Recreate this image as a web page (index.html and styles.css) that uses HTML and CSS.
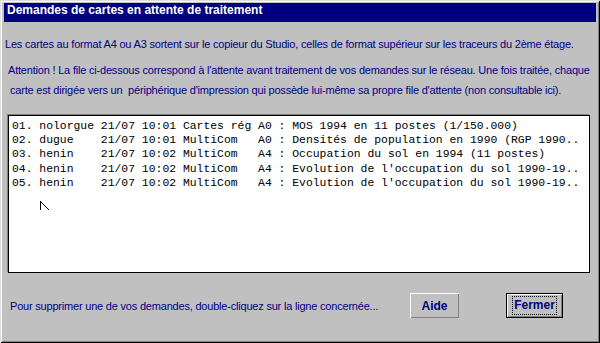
FILE: index.html
```html
<!DOCTYPE html>
<html lang="fr">
<head>
<meta charset="utf-8">
<title>Demandes de cartes en attente de traitement</title>
<link rel="stylesheet" href="styles.css">
</head>
<body>
<div class="window">
  <div class="titlebar">Demandes de cartes en attente de traitement</div>
  <div class="content">
    <p class="line line1">Les cartes au format A4 ou A3 sortent sur le copieur du Studio, celles de format supérieur sur les traceurs du 2ème étage.</p>
    <p class="line line2">Attention ! La file ci-dessous correspond à l'attente avant traitement de vos demandes sur le réseau. Une fois traitée, chaque</p>
    <p class="line line3">carte est dirigée vers un&nbsp; périphérique d'impression qui possède lui-même sa propre file d'attente (non consultable ici).</p>
    <div class="listbox">
      <div class="row">01. nolorgue 21/07 10:01 Cartes rég A0 : MOS 1994 en 11 postes (1/150.000)</div>
      <div class="row">02. dugue    21/07 10:01 MultiCom   A0 : Densités de population en 1990 (RGP 1990..</div>
      <div class="row">03. henin    21/07 10:02 MultiCom   A4 : Occupation du sol en 1994 (11 postes)</div>
      <div class="row">04. henin    21/07 10:02 MultiCom   A4 : Evolution de l'occupation du sol 1990-19..</div>
      <div class="row">05. henin    21/07 10:02 MultiCom   A4 : Evolution de l'occupation du sol 1990-19..</div>
      <svg class="cursor" width="12" height="12" viewBox="0 0 12 12"><path d="M1.5 1 V10 M1.5 1.5 L10 10" stroke="#000" stroke-width="1" fill="none"/></svg>
    </div>
    <div class="footer">
      <span class="hint">Pour supprimer une de vos demandes, double-cliquez sur la ligne concernée...</span>
      <button class="btn btn-aide">Aide</button>
      <button class="btn btn-default"><span class="focus">Fermer</span></button>
    </div>
  </div>
</div>
</body>
</html>
```

FILE: styles.css
```css
html, body {
  margin: 0;
  padding: 0;
  background: #c0c0c0;
}
.window {
  width: 600px;
  height: 343px;
  box-sizing: border-box;
  background: #c0c0c0;
  padding: 3px 4px 4px 4px;
  display: flex;
  flex-direction: column;
  box-shadow: inset 1px 1px 0 #dfdfdf, inset -1px -1px 0 #000, inset 2px 2px 0 #fff, inset -2px -2px 0 #808080;
}
.titlebar {
  height: 19px;
  line-height: 19px;
  background: #000080;
  color: #fff;
  font: bold 12px "Liberation Sans", Arial, sans-serif;
  padding-left: 3px;
  white-space: nowrap;
}
.content {
  display: flex;
  flex-direction: column;
  flex: 1;
  font: 11px "Liberation Sans", Arial, sans-serif;
  letter-spacing: -0.2px;
  color: #000080;
}
.line {
  margin: 0;
  white-space: nowrap;
  line-height: 16px;
}
.line1 {
  margin-top: 14px;
  padding-left: 1px;
}
.line2 {
  margin-top: 10px;
  padding-left: 4px;
}
.line3 {
  margin-top: 4px;
  padding-left: 6px;
}
.listbox {
  position: relative;
  margin: 17px 0 0 4px;
  width: 582px;
  height: 158px;
  box-sizing: border-box;
  background: #fff;
  border: 1px solid #000;
  box-shadow: -1px -1px 0 #808080;
  padding: 3px 2px 0 3px;
  overflow: hidden;
  font: 11.4px "Liberation Mono", "Courier New", monospace;
  letter-spacing: 0;
  color: #000;
}
.row {
  white-space: pre;
  line-height: 14px;
  height: 14.2px;
  overflow: hidden;
}
.cursor {
  position: absolute;
  left: 30px;
  top: 84px;
}
.footer {
  display: flex;
  align-items: center;
  margin-top: 20px;
  padding-left: 6px;
}
.hint {
  flex: 1;
  white-space: nowrap;
}
.btn {
  font: bold 12px "Liberation Sans", Arial, sans-serif;
  letter-spacing: 0;
  color: #000080;
  background: #c0c0c0;
  border: none;
  padding: 0;
  margin: 0;
  height: 25px;
  box-sizing: border-box;
}
.btn-aide {
  width: 49px;
  box-shadow: inset 1px 1px 0 #fff, inset -1px -1px 0 #808080;
}
.btn-default {
  width: 57px;
  margin-left: 47px;
  margin-right: 33px;
  border: 1px solid #000;
  box-shadow: inset 1px 1px 0 #fff, inset -1px -1px 0 #808080;
  display: flex;
  align-items: center;
  justify-content: center;
}
.focus {
  display: block;
  border: 1px dotted #000;
  padding: 2px 1px;
  line-height: 13px;
}
```
